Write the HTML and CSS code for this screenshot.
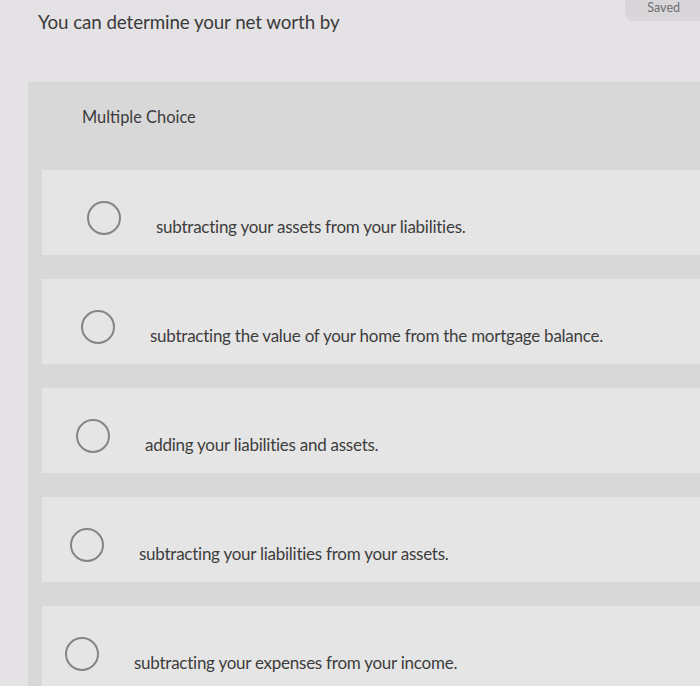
FILE: index.html
```html
<!DOCTYPE html>
<html>
<head>
<meta charset="utf-8">
<link rel="stylesheet" href="styles.css">
</head>
<body>
<div class="page">
  <div class="topbar">
    <h1 class="question">You can determine your net worth by</h1>
    <span class="saved">Saved</span>
  </div>
  <div class="panel">
    <div class="panel-head">Multiple Choice</div>
    <div class="options">
      <div class="option"><span class="radio"></span><span class="label">subtracting your assets from your liabilities.</span></div>
      <div class="option"><span class="radio"></span><span class="label">subtracting the value of your home from the mortgage balance.</span></div>
      <div class="option"><span class="radio"></span><span class="label">adding your liabilities and assets.</span></div>
      <div class="option"><span class="radio"></span><span class="label">subtracting your liabilities from your assets.</span></div>
      <div class="option"><span class="radio"></span><span class="label">subtracting your expenses from your income.</span></div>
    </div>
  </div>
</div>
</body>
</html>
```

FILE: styles.css
```css
* { box-sizing: border-box; }
html, body { margin: 0; padding: 0; }
body {
  width: 700px;
  height: 686px;
  overflow: hidden;
  background: #e4e2e4;
  font-family: Lato, "Open Sans", "Liberation Sans", sans-serif;
  color: #3a3a3a;
}
.page {
  display: flex;
  flex-direction: column;
  height: 686px;
  overflow: hidden;
}
.topbar {
  flex: none;
  display: flex;
  justify-content: space-between;
  align-items: flex-start;
  height: 82px;
}
.question {
  margin: 10px 0 0 38px;
  font-size: 18.8px;
  line-height: 24px;
  font-weight: 400;
  color: #3a3a3a;
  letter-spacing: -0.1px;
}
.saved {
  background: #d9d6d9;
  color: #6e6e6e;
  font-size: 12.5px;
  padding: 0 20px 4px 22px;
  border-radius: 0 0 0 8px;
  height: 21px;
}
.panel {
  flex: 1 0 auto;
  margin-left: 28px;
  background: #d9d8d8;
  display: flex;
  flex-direction: column;
}
.panel-head {
  flex: none;
  height: 88px;
  padding: 25px 0 0 54px;
  font-size: 16.4px;
  color: #3c3c3c;
}
.options {
  display: flex;
  flex-direction: column;
  gap: 24px;
  margin-left: 14px;
}
.option {
  flex: none;
  height: 85px;
  background: #e6e5e5;
  display: flex;
  align-items: flex-start;
  gap: 35px;
}
.option:nth-child(1) { padding-left: 45px; }
.option:nth-child(2) { padding-left: 39px; }
.option:nth-child(3) { padding-left: 34px; }
.option:nth-child(4) { padding-left: 28px; }
.option:nth-child(5) { padding-left: 23px; }
.radio {
  width: 34px;
  height: 34px;
  margin-top: 31px;
  border: 2px solid #858585;
  border-radius: 50%;
  flex: none;
}
.label {
  margin-top: 47px;
  font-size: 17px;
  line-height: 20px;
  color: #3d3d3d;
  letter-spacing: -0.25px;
}
```
